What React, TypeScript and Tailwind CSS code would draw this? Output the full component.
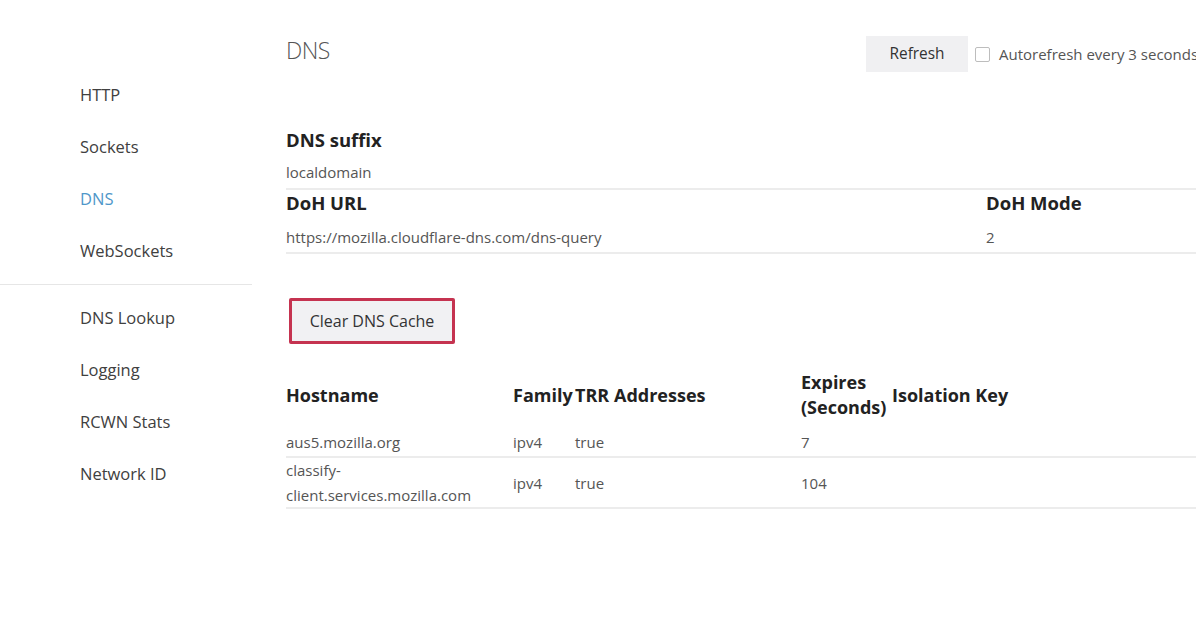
const navTop = ["HTTP", "Sockets", "DNS", "WebSockets"]
const navBottom = ["DNS Lookup", "Logging", "RCWN Stats", "Network ID"]

const entries = [
	{ host: ["aus5.mozilla.org"], family: "ipv4", trr: "true", addresses: "", expires: "7", key: "" },
	{
		host: ["classify-", "client.services.mozilla.com"],
		family: "ipv4",
		trr: "true",
		addresses: "",
		expires: "104",
		key: "",
	},
]

function NavItem({ label, active }: { label: string; active?: boolean }) {
	return (
		<div
			className={
				"flex h-[52px] items-center pl-[80px] text-[16.5px] " +
				(active ? "text-[#4f97c9]" : "text-[#404040]")
			}
		>
			{label}
		</div>
	)
}

export default function App() {
	return (
		<div
			className="flex h-[628px] w-[1196px] overflow-hidden bg-white text-[#555]"
			style={{ fontFamily: '"Open Sans", "Noto Sans", sans-serif' }}
		>
			{/* Sidebar */}
			<aside className="w-[252px] shrink-0 pt-[69px]">
				{navTop.map((n) => (
					<NavItem key={n} label={n} active={n === "DNS"} />
				))}
				<div className="my-[7px] h-px bg-[#e6e6e6]" />
				{navBottom.map((n) => (
					<NavItem key={n} label={n} />
				))}
			</aside>

			{/* Main */}
			<main className="ml-[34px] w-[910px] shrink-0 pt-[36px]">
				<div className="flex h-[36px] items-center">
					<h1 className="w-[580px] shrink-0 -translate-y-[4px] text-[23px] font-light tracking-tight text-[#555]">DNS</h1>
					<button className="h-[36px] w-[102px] shrink-0 bg-[#f0f0f2] text-[15.4px] text-[#333]">Refresh</button>
					<label className="ml-[7px] flex shrink-0 items-center gap-[9px] whitespace-nowrap text-[15px] text-[#555]">
						<span className="h-[15px] w-[15px] rounded-[2px] border border-[#bdbdbd] bg-white" />
						Autorefresh every 3 seconds
					</label>
				</div>

				{/* DNS suffix */}
				<div className="mt-[51px]">
					<div className="flex h-[34px] items-center text-[18.5px] font-bold text-[#222]">DNS suffix</div>
					<div className="flex h-[33px] items-center border-b-2 border-[#ececec] text-[15px]">localdomain</div>
				</div>

				{/* DoH */}
				<div className="flex border-b-2 border-[#ececec]">
					<div className="w-[700px]">
						<div className="flex h-[26px] items-center text-[18.5px] font-bold text-[#222]">DoH URL</div>
						<div className="flex h-[36px] items-center pt-[6px] text-[15px]">https://mozilla.cloudflare-dns.com/dns-query</div>
					</div>
					<div className="flex-1">
						<div className="flex h-[26px] items-center text-[18.5px] font-bold text-[#222]">DoH Mode</div>
						<div className="flex h-[36px] items-center pt-[6px] text-[15px]">2</div>
					</div>
				</div>

				{/* Clear cache */}
				<div className="mt-[44px] ml-[3px] flex h-[46px] w-[166px] items-center justify-center rounded-[2px] border-[3px] border-[#c53350] bg-[#f1f1f3]">
					<span className="text-[16px] text-[#333]">Clear DNS Cache</span>
				</div>

				{/* Cache table */}
				<table className="mt-[26px] w-full table-fixed border-collapse">
					<colgroup>
						<col className="w-[227px]" />
						<col className="w-[62px]" />
						<col className="w-[39px]" />
						<col className="w-[187px]" />
						<col className="w-[91px]" />
						<col />
					</colgroup>
					<thead>
						<tr className="h-[50px] text-left align-middle text-[18px] leading-[25px] text-[#222]">
							<th className="font-bold">Hostname</th>
							<th className="font-bold">Family</th>
							<th className="font-bold">TRR</th>
							<th className="font-bold">Addresses</th>
							<th className="font-bold whitespace-nowrap">
								Expires
								<br />
								(Seconds)
							</th>
							<th className="font-bold whitespace-nowrap">Isolation Key</th>
						</tr>
					</thead>
					<tbody className="text-[15px] leading-[24px]">
						{entries.map((e) => {
							const single = e.host.length === 1
							const cell = single ? "pt-[8px] align-middle" : "align-middle"
							return (
								<tr
									key={e.host.join("")}
									className={"border-b-2 border-[#ececec] " + (single ? "h-[37px]" : "h-[49px]")}
								>
									<td className={cell}>
										{e.host.map((h, i) => (
											<div key={h} className={i > 0 ? "mt-[1px]" : ""}>
												{h}
											</div>
										))}
									</td>
									<td className={cell}>{e.family}</td>
									<td className={cell}>{e.trr}</td>
									<td className={cell}>{e.addresses}</td>
									<td className={cell}>{e.expires}</td>
									<td className={cell}>{e.key}</td>
								</tr>
							)
						})}
					</tbody>
				</table>
			</main>
		</div>
	)
}
